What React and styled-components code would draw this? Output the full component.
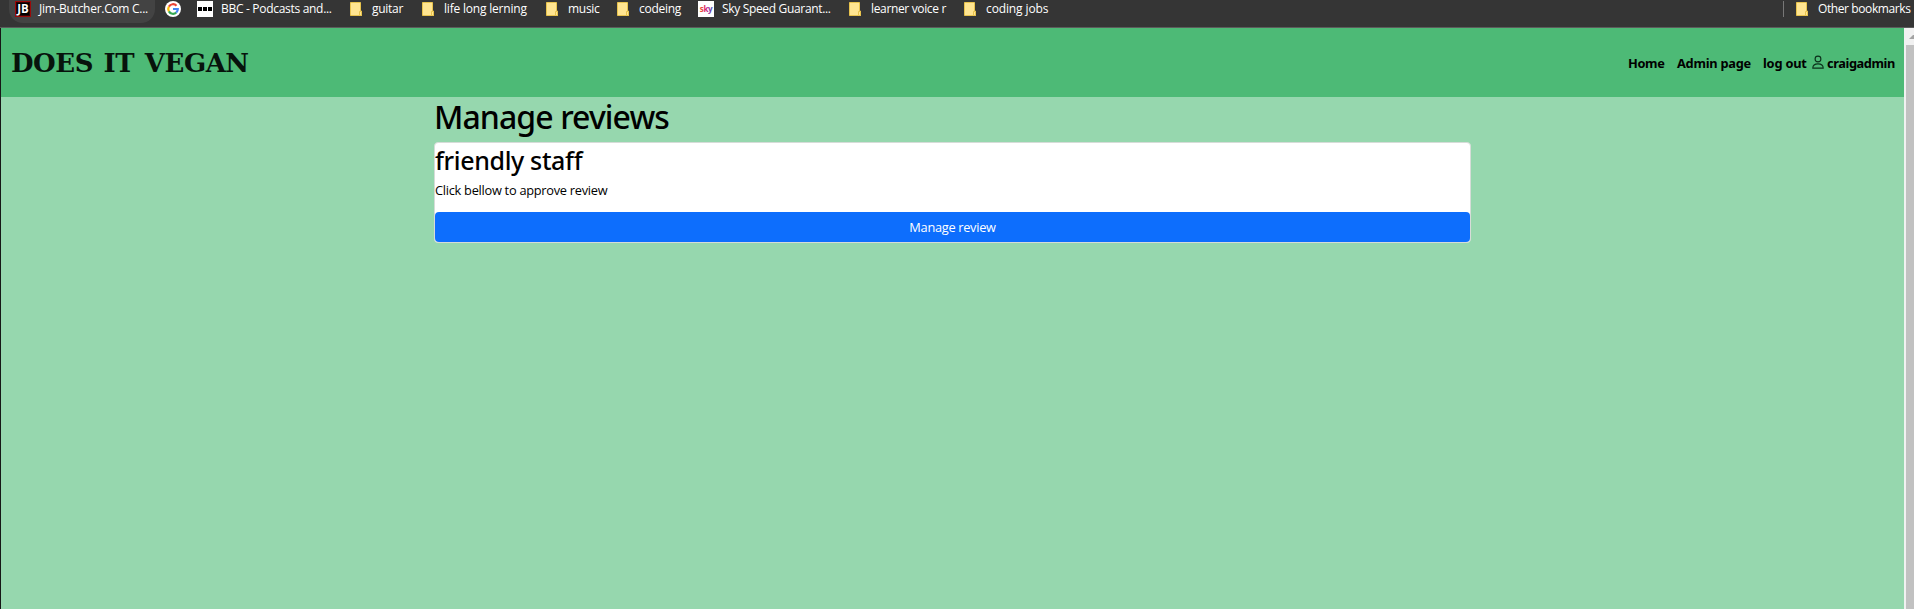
import React from 'react';
import styled, { createGlobalStyle } from 'styled-components';

const GlobalStyle = createGlobalStyle`
  *, *::before, *::after { box-sizing: border-box; }
  html, body { margin: 0; padding: 0; overflow: hidden; }
  body { font-family: 'Noto Sans', 'Open Sans', sans-serif; color: #000; }
  h1, h2, p { margin: 0; }
`;

const Window = styled.div`
  width: 1914px;
  height: 609px;
  display: flex;
  flex-direction: column;
  overflow: hidden;
  background: #353535;
`;

const BookmarksBar = styled.div`
  flex: none;
  display: flex;
  height: 28px;
  padding-left: 9px;
  background: #353535;
  border-bottom: 1px solid #5c5c5c;
`;

const Bookmark = styled.div`
  flex: none;
  display: flex;
  align-items: flex-start;
  gap: ${(p) => p.$gap ?? 8}px;
  width: ${(p) => p.$width}px;
  height: 23px;
  padding-top: 1px;
  white-space: nowrap;
`;

const ActiveBookmark = styled(Bookmark)`
  width: 146px;
  margin-right: 10px;
  padding-left: 6px;
  background: #434343;
  border-radius: 0 0 14px 14px;
`;

const BookmarkLabel = styled.span`
  font-family: 'Open Sans', sans-serif;
  font-size: 12px;
  line-height: 16px;
  letter-spacing: ${(p) => p.$spacing ?? -0.28}px;
  color: #fff;
`;

const BookmarkIcon = styled.svg`
  flex: none;
  display: block;
  width: 16px;
  height: 16px;
`;

const Separator = styled.div`
  width: 1px;
  height: 16px;
  margin: 1px 10px 0 auto;
  background: #777;
`;

const Viewport = styled.div`
  flex: 1;
  display: flex;
  min-height: 0;
  border-left: 1px solid #161616;
`;

const Page = styled.div`
  flex: 1;
  background: #96d7ae;
`;

const NavBar = styled.nav`
  display: flex;
  align-items: center;
  justify-content: space-between;
  height: 69px;
  padding: 0 9px 0 10px;
  background: #4dba76;
`;

const Brand = styled.div`
  font-family: 'DejaVu Serif', serif;
  font-size: 26px;
  font-weight: 700;
  line-height: 32px;
  letter-spacing: -0.45px;
  word-spacing: 2px;
  color: #07130c;
  white-space: nowrap;
`;

const NavLinks = styled.div`
  display: flex;
  align-items: center;
  padding-top: 1px;
`;

const NavLink = styled.a`
  width: ${(p) => p.$width}px;
  font-size: 12.8px;
  font-weight: 700;
  line-height: 20px;
  letter-spacing: ${(p) => p.$spacing}px;
  white-space: nowrap;
`;

const UserIcon = styled.svg`
  display: block;
  width: 14px;
  height: 14px;
  margin: -2px 2px 0 0;
`;

const Container = styled.main`
  width: 1037px;
  margin-left: 433px;
  padding-top: 1px;
`;

const Title = styled.h1`
  height: 44px;
  font-size: 32px;
  font-weight: 500;
  line-height: 38px;
  letter-spacing: -0.92px;
  white-space: nowrap;
`;

const Card = styled.section`
  display: flex;
  flex-direction: column;
  height: 101px;
  background: #fff;
  border: 1px solid #d6dcd8;
  border-radius: 4px;
`;

const CardTitle = styled.h2`
  height: 38px;
  padding-top: 2px;
  font-size: 25px;
  font-weight: 500;
  line-height: 30px;
  letter-spacing: -0.35px;
`;

const CardText = styled.p`
  flex: 1;
  font-family: 'Open Sans', sans-serif;
  font-size: 12.8px;
  line-height: 19px;
  letter-spacing: -0.27px;
`;

const ManageButton = styled.button`
  height: 30px;
  padding: 1px 0 0;
  border: 0;
  border-radius: 4px;
  background: #0d6efd;
  color: #fff;
  font-family: 'Open Sans', sans-serif;
  font-size: 12.8px;
  line-height: 19px;
  letter-spacing: -0.3px;
`;

const Scrollbar = styled.div`
  width: 10px;
  display: flex;
  flex-direction: column;
  align-items: flex-end;
  background: #f1f1f1;
`;

const ScrollArrow = styled.svg`
  display: block;
  width: 8px;
  height: 17px;
`;

const ScrollThumb = styled.div`
  flex: 1;
  width: 8px;
  background: #c1c1c1;
`;

const Folder = () => (
  <BookmarkIcon viewBox="0 0 16 16">
    <path d="M2.5 1.5h10v8.5h1v4.5h-11z" fill="#ffe591" stroke="#e8c34d" />
    <path d="M11.5 14.5v-4h2v4z" fill="#ffe591" stroke="#e8c34d" />
  </BookmarkIcon>
);

const ButcherIcon = () => (
  <BookmarkIcon viewBox="0 0 16 16">
    <rect x=".5" y=".5" width="15" height="15" fill="#000" stroke="#9c0909" />
    <rect x="1.5" y="1.5" width="13" height="13" fill="none" stroke="#5c0808" strokeDasharray="1 1" />
    <text x="8" y="12.3" textAnchor="middle" fontFamily="Open Sans, sans-serif" fontSize="11.5" fontWeight="700" fill="#fff">JB</text>
  </BookmarkIcon>
);

const GoogleIcon = () => (
  <BookmarkIcon viewBox="0 0 16 16">
    <circle cx="8" cy="8" r="8" fill="#fff" />
    <g fill="none" strokeWidth="2.2">
      <path d="M3.9 5.6A4.8 4.8 0 0 1 11.5 4.7" stroke="#ea4335" />
      <path d="M3.9 10.4A4.8 4.8 0 0 1 3.9 5.6" stroke="#fbbc05" />
      <path d="M11.2 11.6A4.8 4.8 0 0 1 3.9 10.4" stroke="#34a853" />
      <path d="M8 8H12.8A4.8 4.8 0 0 1 11.2 11.6" stroke="#4285f4" />
    </g>
  </BookmarkIcon>
);

const BbcIcon = () => (
  <BookmarkIcon viewBox="0 0 16 16">
    <path d="M0 0h16v16H0z" fill="#fff" />
    <path d="M1 6h4v4H1zM6 6h4v4H6zM11 6h4v4h-4z" fill="#000" />
  </BookmarkIcon>
);

const SkyIcon = () => (
  <BookmarkIcon viewBox="0 0 16 16">
    <defs>
      <linearGradient id="sky">
        <stop offset="0" stopColor="#f05a28" />
        <stop offset=".5" stopColor="#d6187c" />
        <stop offset="1" stopColor="#3556c8" />
      </linearGradient>
    </defs>
    <path d="M0 0h16v16H0z" fill="#fff" />
    <text x="8" y="10.5" textAnchor="middle" fontFamily="Open Sans, sans-serif" fontSize="8" fontWeight="700" letterSpacing="-.3" fill="url(#sky)">sky</text>
  </BookmarkIcon>
);

const bookmarks = [
  { Icon: GoogleIcon, width: 32 },
  { Icon: BbcIcon, label: 'BBC - Podcasts and...', width: 151, spacing: -0.3 },
  { Icon: Folder, label: 'guitar', width: 72 },
  { Icon: Folder, label: 'life long lerning', width: 124, spacing: -0.2 },
  { Icon: Folder, label: 'music', width: 71 },
  { Icon: Folder, label: 'codeing', width: 83 },
  { Icon: SkyIcon, label: 'Sky Speed Guarant...', width: 149, spacing: -0.33 },
  { Icon: Folder, label: 'learner voice r', width: 115, spacing: -0.35 },
  { Icon: Folder, label: 'coding jobs', width: 100, spacing: -0.12 },
];

export default function App() {
  return (
    <Window>
      <GlobalStyle />
      <BookmarksBar>
        <ActiveBookmark>
          <ButcherIcon />
          <BookmarkLabel>Jim-Butcher.Com C...</BookmarkLabel>
        </ActiveBookmark>
        {bookmarks.map(({ Icon, label, width, gap, spacing }) => (
          <Bookmark key={width + (label ?? '')} $width={width} $gap={gap}>
            <Icon />
            {label && <BookmarkLabel $spacing={spacing}>{label}</BookmarkLabel>}
          </Bookmark>
        ))}
        <Separator />
        <Bookmark $width={120}>
          <Folder />
          <BookmarkLabel $spacing={-0.4}>Other bookmarks</BookmarkLabel>
        </Bookmark>
      </BookmarksBar>
      <Viewport>
        <Page>
          <NavBar>
            <Brand>DOES IT VEGAN</Brand>
            <NavLinks>
              <NavLink $width={49} $spacing={-0.35}>Home</NavLink>
              <NavLink $width={86} $spacing={-0.25}>Admin page</NavLink>
              <NavLink $width={48} $spacing={-0.2}>log out</NavLink>
              <UserIcon viewBox="0 0 14 14" fill="none" stroke="#0b2f1a" strokeWidth="1.1">
                <circle cx="7" cy="4" r="2.9" />
                <path d="M1.8 13.1c0-2.8 1.8-4.2 5.2-4.2s5.2 1.4 5.2 4.2z" />
              </UserIcon>
              <NavLink $width={68} $spacing={-0.42}>craigadmin</NavLink>
            </NavLinks>
          </NavBar>
          <Container>
            <Title>Manage reviews</Title>
            <Card>
              <CardTitle>friendly staff</CardTitle>
              <CardText>Click bellow to approve review</CardText>
              <ManageButton type="button">Manage review</ManageButton>
            </Card>
          </Container>
        </Page>
        <Scrollbar>
          <ScrollArrow viewBox="0 0 8 17">
            <path d="M3 11l4-4h1v4z" fill="#a3a3a3" />
          </ScrollArrow>
          <ScrollThumb />
        </Scrollbar>
      </Viewport>
    </Window>
  );
}
